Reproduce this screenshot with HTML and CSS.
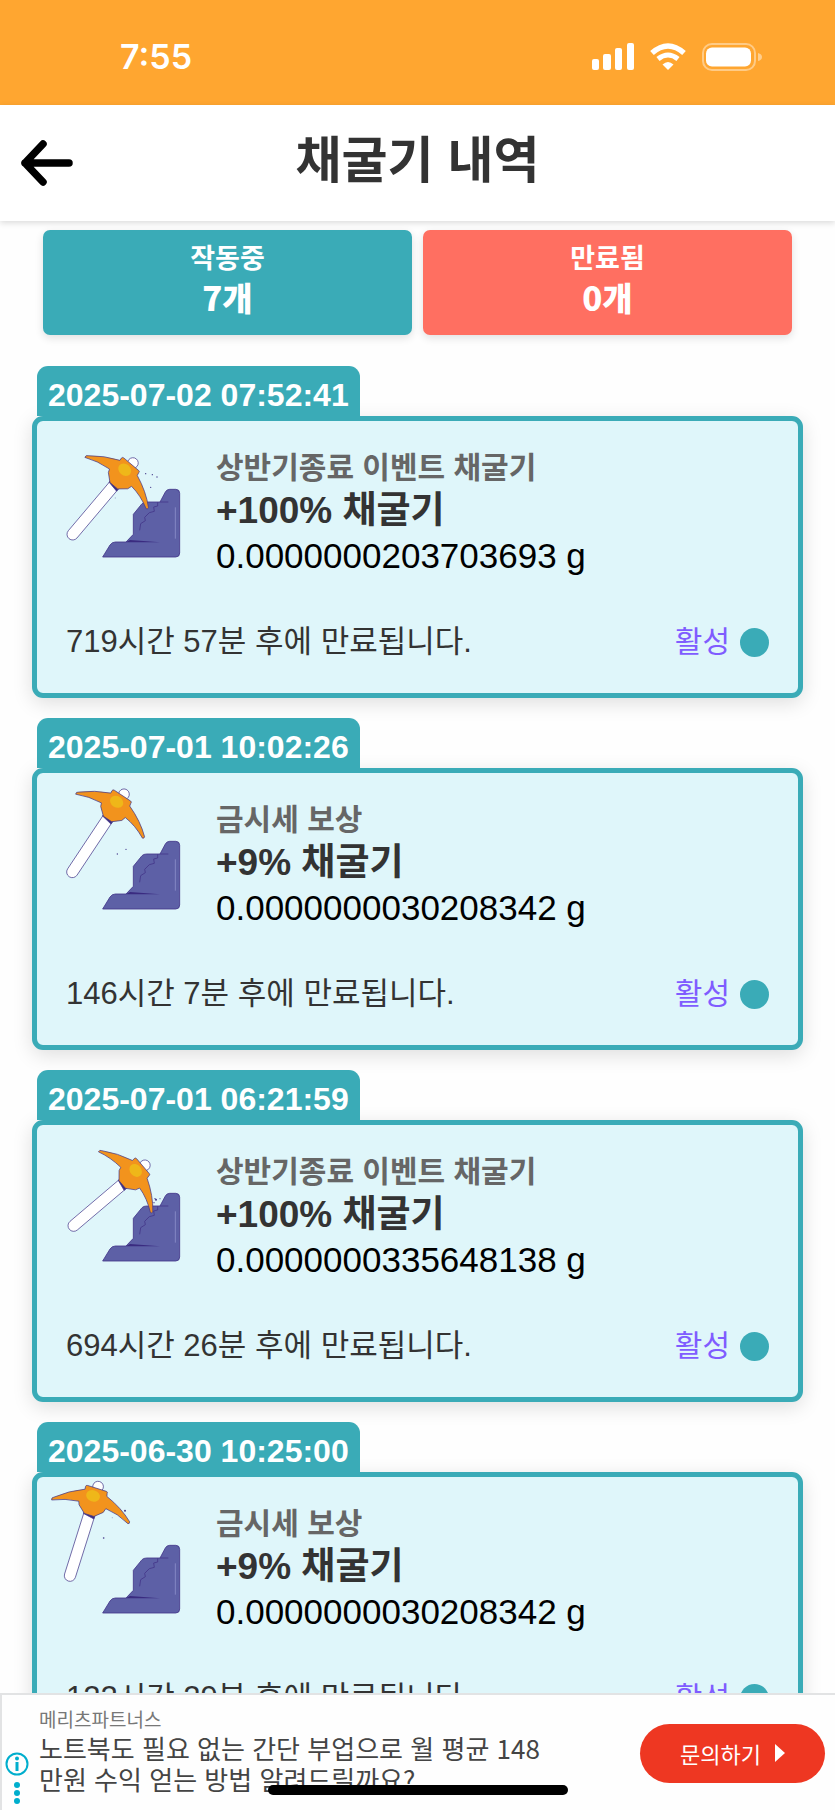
FILE: index.html
```html
<!DOCTYPE html>
<html lang="ko">
<head>
<meta charset="utf-8">
<meta name="viewport" content="width=device-width, initial-scale=1">
<title>채굴기 내역</title>
<link rel="stylesheet" href="styles.css">
</head>
<body>
<svg class="sprite" aria-hidden="true">
  <symbol id="rock" viewBox="51 62 432 420">
    <path d="M248 470 L270 434 Q276 425 286 425 H318 L340 402 V342 L366 310 Q371 305 380 305 H420 L436 275 Q440 267 449 267 H467 Q479 267 479 279 V458 Q479 470 467 470 Z" fill="#5d60a6" stroke="#433689" stroke-width="2.5" stroke-linejoin="round"/>
    <path d="M317 426 L330 419 L420 426 Z" fill="#3a2b80"/>
    <path d="M420 305 H445 M413 306 V317 L401 320 L403 333 L388 337 L374 351 L376 361 L362 370 L359 390" fill="none" stroke="#433689" stroke-width="2.5"/>
    <path d="M466 321 V415" stroke="#8587c4" stroke-width="3"/>
  </symbol>
  <g id="pick" stroke="#433689" stroke-width="2">
    <circle cx="0" cy="-280" r="16" fill="#fff"/>
    <path d="M-17 -195 V0 A17 17 0 0 0 17 0 V-195 Z" fill="#fff"/>
    <path d="M-17 -196 H17 V-184 L-17 -190 Z" fill="#3a2b80"/>
    <path d="M-121 -200 Q-124 -207 -117 -210 Q-80 -242 -35 -261 L-36 -269 Q-36 -274 -31 -274 H28 Q33 -274 32 -269 L34 -260 Q86 -240 122 -208 Q124 -202 119 -201 Q80 -221 42 -224 L38 -211 L15 -191 H-15 L-38 -211 L-42 -221 Q-84 -217 -121 -200 Z" fill="#f2931d"/>
    <ellipse cx="-6" cy="-249" rx="21" ry="17" fill="#efb719" stroke="none"/>
  </g>
</svg>

<div class="statusbar">
  <span class="statusbar__time">7:55</span>
  <div class="statusbar__icons">
    <svg width="42" height="27" viewBox="0 0 42 27" fill="#fff" aria-hidden="true">
      <rect x="0" y="16" width="7" height="11" rx="2"/><rect x="11" y="11" width="8" height="16" rx="2"/><rect x="23" y="5" width="7" height="22" rx="2"/><rect x="35" y="0" width="7" height="27" rx="2"/>
    </svg>
    <svg width="38" height="27" viewBox="0 0 38 27" aria-hidden="true">
      <path d="M3 10 Q19 -4 35 10" fill="none" stroke="#fff" stroke-width="5.5"/>
      <path d="M9 16 Q19 8 29 16" fill="none" stroke="#fff" stroke-width="5"/>
      <path d="M13.500 21.500 Q19 16.500 24.500 21.500 L19 27 Z" fill="#fff"/>
    </svg>
    <svg width="60" height="28" viewBox="0 0 60 28" aria-hidden="true">
      <rect x="1" y="1" width="52" height="26" rx="9" fill="none" stroke="#fff" stroke-opacity=".42" stroke-width="2"/>
      <rect x="4" y="4.500" width="45" height="19" rx="6" fill="#fff"/>
      <path d="M56 10 Q60 11 60 14 Q60 17 56 18 Z" fill="#fff" fill-opacity=".45"/>
    </svg>
  </div>
</div>

<header class="header">
  <button class="header__back" type="button" aria-label="뒤로">
    <svg width="54" height="46" viewBox="0 0 54 46" fill="none" stroke="#000" stroke-width="7.500" stroke-linecap="round" stroke-linejoin="round" aria-hidden="true">
      <path d="M49 23 H5 M23 4 L5 23 L23 42"/>
    </svg>
  </button>
  <h1 class="header__title">채굴기 내역</h1>
</header>

<main class="content">
  <section class="stats">
    <div class="stat stat--running"><span class="stat__label">작동중</span><strong class="stat__count">7개</strong></div>
    <div class="stat stat--expired"><span class="stat__label">만료됨</span><strong class="stat__count">0개</strong></div>
  </section>

  <section class="miners">
    <article class="miner">
      <time class="miner__date">2025-07-02 07:52:41</time>
      <div class="miner__card">
        <div class="miner__main">
          <svg class="miner__art" viewBox="51 62 432 420" aria-hidden="true">
            <use href="#rock" x="51" y="62" width="432" height="420"/>
            <use href="#pick" transform="translate(158 402) rotate(40.200)"/>
            <g fill="#433689"><circle cx="377" cy="220" r="2"/><circle cx="397" cy="223" r="2"/><circle cx="411" cy="230" r="2"/><circle cx="392" cy="261" r="2"/><circle cx="286" cy="293" r="2" opacity=".3"/></g>
          </svg>
          <div class="miner__info">
            <p class="miner__source">상반기종료 이벤트 채굴기</p>
            <h2 class="miner__name">+100% 채굴기</h2>
            <p class="miner__rate">0.0000000203703693 g</p>
          </div>
        </div>
        <div class="miner__foot"><span>719시간 57분 후에 만료됩니다.</span><span class="miner__state">활성</span></div>
      </div>
    </article>

    <article class="miner">
      <time class="miner__date">2025-07-01 10:02:26</time>
      <div class="miner__card">
        <div class="miner__main">
          <svg class="miner__art" viewBox="51 62 432 420" aria-hidden="true">
            <use href="#rock" x="51" y="62" width="432" height="420"/>
            <use href="#pick" transform="translate(157 359) rotate(33.600)"/>
            <g fill="#433689"><circle cx="318" cy="291" r="2"/><circle cx="292" cy="305" r="2"/></g>
          </svg>
          <div class="miner__info">
            <p class="miner__source">금시세 보상</p>
            <h2 class="miner__name">+9% 채굴기</h2>
            <p class="miner__rate">0.0000000030208342 g</p>
          </div>
        </div>
        <div class="miner__foot"><span>146시간 7분 후에 만료됩니다.</span><span class="miner__state">활성</span></div>
      </div>
    </article>

    <article class="miner">
      <time class="miner__date">2025-07-01 06:21:59</time>
      <div class="miner__card">
        <div class="miner__main">
          <svg class="miner__art" viewBox="51 62 432 420" aria-hidden="true">
            <use href="#rock" x="51" y="62" width="432" height="420"/>
            <use href="#pick" transform="translate(161 364) rotate(49.700)"/>
            <g fill="#433689"><circle cx="402" cy="295" r="2"/><circle cx="405" cy="283" r="2"/><circle cx="408" cy="286" r="3"/><circle cx="420" cy="283" r="2" opacity=".7"/></g>
          </svg>
          <div class="miner__info">
            <p class="miner__source">상반기종료 이벤트 채굴기</p>
            <h2 class="miner__name">+100% 채굴기</h2>
            <p class="miner__rate">0.0000000335648138 g</p>
          </div>
        </div>
        <div class="miner__foot"><span>694시간 26분 후에 만료됩니다.</span><span class="miner__state">활성</span></div>
      </div>
    </article>

    <article class="miner">
      <time class="miner__date">2025-06-30 10:25:00</time>
      <div class="miner__card">
        <div class="miner__main">
          <svg class="miner__art" viewBox="51 62 432 420" aria-hidden="true">
            <use href="#rock" x="51" y="62" width="432" height="420"/>
            <use href="#pick" transform="translate(150 358) rotate(17.500)"/>
            <g fill="#433689"><circle cx="315" cy="163" r="3"/><circle cx="277" cy="184" r="2" opacity=".3"/><circle cx="251" cy="245" r="2.500"/></g>
          </svg>
          <div class="miner__info">
            <p class="miner__source">금시세 보상</p>
            <h2 class="miner__name">+9% 채굴기</h2>
            <p class="miner__rate">0.0000000030208342 g</p>
          </div>
        </div>
        <div class="miner__foot"><span>122시간 29분 후에 만료됩니다.</span><span class="miner__state">활성</span></div>
      </div>
    </article>
  </section>
</main>

<aside class="ad">
  <div class="ad__marks">
    <svg width="24" height="52" viewBox="0 0 24 52" fill="#00aecd" aria-hidden="true">
      <circle cx="12" cy="12" r="10.500" fill="none" stroke="#00aecd" stroke-width="2"/>
      <circle cx="12" cy="6.500" r="2"/><rect x="10.500" y="10" width="3" height="9"/>
      <circle cx="12" cy="33" r="3"/><circle cx="12" cy="41" r="3"/><circle cx="12" cy="49" r="3"/>
    </svg>
  </div>
  <div class="ad__text">
    <p class="ad__brand">메리츠파트너스</p>
    <p class="ad__copy">노트북도 필요 없는 간단 부업으로 월 평균 148만원 수익 얻는 방법 알려드릴까요?</p>
  </div>
  <button class="ad__button" type="button">문의하기
    <svg width="10" height="18" viewBox="0 0 10 18" aria-hidden="true"><path d="M0 0 L10 9 L0 18 Z" fill="#fff"/></svg>
  </button>
  <div class="home-bar"></div>
</aside>
</body>
</html>
```

FILE: styles.css
```css
* {
  box-sizing: border-box;
}

body {
  margin: 0;
  background: #fefefe;
  color: #333;
  font-family: "Liberation Sans", "Noto Sans CJK KR", sans-serif;
}

h1, h2, p {
  margin: 0;
}

button {
  border: 0;
  padding: 0;
  background: none;
  font: inherit;
}

svg {
  display: block;
}

.sprite {
  position: absolute;
  width: 0;
  height: 0;
}

.statusbar {
  display: flex;
  align-items: center;
  justify-content: space-between;
  height: 105px;
  padding: 8px 73px 0 120px;
  background: #ffa630;
  color: #fff;
}

.statusbar__time {
  font: 600 34px/40px Inter, sans-serif;
}

.statusbar__icons {
  display: flex;
  align-items: center;
  gap: 15px;
}

.header {
  display: grid;
  grid-template-columns: 100px 1fr 100px;
  align-items: center;
  height: 116px;
  background: #fff;
  box-shadow: 0 2px 6px rgba(0, 0, 0, .14);
}

.header__back {
  justify-self: start;
  padding-left: 20px;
}

.header__title {
  font-family: "Noto Sans CJK KR", sans-serif;
  font-size: 50px;
  line-height: 60px;
  padding-bottom: 14px;
  text-align: center;
}

.content {
  padding: 9px 32px 0;
}

.stats {
  display: grid;
  grid-template-columns: 1fr 1fr;
  gap: 11px;
  padding: 0 11px;
}

.stat {
  display: flex;
  flex-direction: column;
  align-items: center;
  height: 105px;
  padding-top: 7px;
  border-radius: 7px;
  box-shadow: 0 3px 8px rgba(0, 0, 0, .12);
  color: #fff;
  font-family: "Noto Sans CJK KR", sans-serif;
  font-weight: 700;
}

.stat--running {
  background: #3aabb7;
}

.stat--expired {
  background: #ff6f61;
}

.stat__label {
  font-size: 27px;
  line-height: 40px;
}

.stat__count {
  font-size: 33px;
  line-height: 40px;
}

.miners {
  display: flex;
  flex-direction: column;
  gap: 20px;
  margin-top: 31px;
}

.miner {
  display: flex;
  flex-direction: column;
  align-items: flex-start;
}

.miner__date {
  position: relative;
  z-index: 1;
  height: 50px;
  margin-left: 5px;
  padding: 0 11px;
  border-radius: 11px 11px 0 0;
  background: #3aabb7;
  color: #fff;
  font-size: 32px;
  font-weight: 700;
  line-height: 58px;
}

.miner__card {
  width: 100%;
  border: 5px solid #3aabb7;
  border-radius: 11px;
  background: #dff6fa;
  box-shadow: 0 5px 20px rgba(0, 0, 0, .13);
}

.miner__main {
  display: flex;
  gap: 35px;
}

.miner__art {
  flex: none;
  width: 144px;
  height: 140px;
}

.miner__info {
  padding-top: 26px;
}

.miner__source {
  color: #666;
  font-size: 30px;
  font-weight: 700;
  line-height: 42px;
}

.miner__name {
  font-size: 37px;
  line-height: 44px;
}

.miner__rate {
  color: #000;
  font-size: 35px;
  line-height: 46px;
}

.miner__foot {
  display: flex;
  align-items: center;
  justify-content: space-between;
  margin-top: 41px;
  padding: 0 29px 29px;
  font-size: 31px;
  line-height: 44px;
}

.miner__state {
  display: flex;
  align-items: center;
  gap: 10px;
  color: #7f5cff;
  font-size: 30px;
}

.miner__state::after {
  content: "";
  width: 29px;
  height: 29px;
  border-radius: 50%;
  background: #3aabb7;
}

.ad {
  position: fixed;
  z-index: 2;
  right: 0;
  bottom: 0;
  left: 0;
  display: flex;
  height: 117px;
  border-top: 2px solid #e2e3e4;
  border-left: 2px solid #e2e3e4;
  background: #fefefe;
  color: #444;
  font-family: "Noto Sans CJK KR", sans-serif;
}

.ad__marks {
  flex: none;
  width: 37px;
  padding: 57px 0 0 3px;
}

.ad__text {
  flex: 0 1 510px;
  padding-top: 11px;
}

.ad__brand {
  color: #777;
  font-size: 19px;
  line-height: 26px;
}

.ad__copy {
  font-size: 26px;
  line-height: 31px;
}

.ad__button {
  display: flex;
  flex: none;
  align-items: center;
  justify-content: center;
  gap: 14px;
  width: 185px;
  height: 59px;
  margin: 29px 10px 0 auto;
  padding-bottom: 2px;
  border-radius: 30px;
  background: #ee3722;
  color: #fff;
  font-size: 22px;
}

.home-bar {
  position: absolute;
  bottom: 15px;
  left: 50%;
  width: 300px;
  height: 10px;
  margin-left: -151px;
  border-radius: 5px;
  background: #000;
}
```
